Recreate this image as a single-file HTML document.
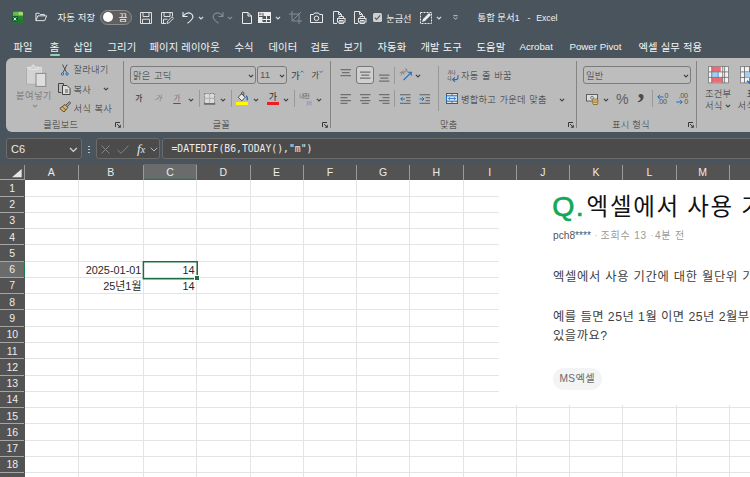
<!DOCTYPE html>
<html lang="ko">
<head>
<meta charset="utf-8">
<title>통합 문서1 - Excel</title>
<style>
html,body{margin:0;padding:0;background:#49545d;}
body{width:750px;height:477px;overflow:hidden;position:relative;font-family:"Liberation Sans","Noto Sans CJK KR",sans-serif;}
#app{position:absolute;left:0;top:0;width:750px;height:477px;overflow:hidden;background:#49545d;}
.t{position:absolute;white-space:nowrap;line-height:14px;height:14px;}
.tt{color:#f2f2f2;font-size:9.8px;}
.tab{color:#f4f4f4;font-size:10.3px;letter-spacing:0.15px;}
#ribbon{position:absolute;left:6px;top:58px;width:760px;height:73.9px;background:#bbbbbb;border-radius:6px 0 0 6px;}
.rt{color:#2e2e2e;font-weight:300;font-size:9.3px;letter-spacing:0.2px;word-spacing:0.7px;}
.rl{color:#333;font-weight:300;font-size:9.3px;letter-spacing:0.2px;}
.dis{color:#7e7e7e;font-weight:400;}
.vsep{position:absolute;width:1px;background:#848484;}
.box{position:absolute;box-sizing:border-box;border:1px solid #7b7b7b;border-radius:3px;background:#bdbdbd;}
svg{position:absolute;overflow:visible;}
.fbox{position:absolute;box-sizing:border-box;border:1px solid #6b6b6b;border-radius:3px;background:#4b4b4b;}
#sheet{position:absolute;left:0;top:163.5px;width:750px;height:314px;background:#fff;overflow:hidden;}
.ch{position:absolute;top:0;height:16.3px;background:#535353;color:#ececec;font-size:10.5px;text-align:center;line-height:17px;}
.rh{position:absolute;left:0;width:24.5px;background:#535353;color:#ececec;font-size:10.5px;text-align:center;}
.gl{position:absolute;background:#e4e4e4;}
.cell{position:absolute;font-size:10.9px;color:#2a2a2a;white-space:nowrap;text-align:right;line-height:16px;height:16px;}
#pic{position:absolute;left:499px;top:16.3px;width:260px;height:225px;background:#fff;overflow:hidden;font-family:"Liberation Sans","Noto Sans CJK KR",sans-serif;}
</style>
</head>
<body>
<div id="app">
<!-- title bar -->
<svg style="left:11px;top:11px" width="13" height="13" viewBox="11 11 13 13"><rect x="13" y="11.8" width="10" height="11.6" rx="1.2" fill="#23792c"/><path d="M13 15.7 V13 A1.2 1.2 0 0 1 14.2 11.8 H18.3 V15.7 Z" fill="#5cc04a"/><path d="M18.3 11.8 H21.8 A1.2 1.2 0 0 1 23 13 V15.7 H18.3 Z" fill="#a4da69"/><rect x="18.3" y="15.7" width="4.7" height="3.6" fill="#2a8533"/><rect x="12" y="16.3" width="5.8" height="5.4" rx="0.9" fill="#0e5a2d"/><path d="M13.6 17.5 L16.2 20.5 M16.2 17.5 L13.6 20.5" stroke="#fff" stroke-width="0.95" fill="none"/></svg>
<svg style="left:35px;top:12.4px" width="12.3" height="9.6" viewBox="0 0 13 10" preserveAspectRatio="none"><path d="M1 9 V1.3 H4.3 L5.6 2.6 H10 V4 M1 9 L3 4 H12.3 L10.3 9 Z" fill="none" stroke="#e8e8e8" stroke-width="1" stroke-linejoin="round"/></svg>
<div class="t tt" style="left:57.4px;top:11.2px;font-size:9.4px;letter-spacing:0.15px">자동 저장</div>
<div style="position:absolute;left:100.3px;top:9.7px;width:31.6px;height:15px;box-sizing:border-box;border:1px solid #8d8d8d;border-radius:7.5px;background:#5f5f5f"></div>
<div style="position:absolute;left:102.8px;top:12px;width:10.4px;height:10.4px;border-radius:5.2px;background:#fff"></div>
<div class="t tt" style="left:118.7px;top:11.4px;font-size:9.3px;">끔</div>
<svg style="left:139.5px;top:11.5px" width="12" height="12" viewBox="0 0 12 12"><path d="M0.5 0.5 H11.5 V11.5 H0.5 Z M3 0.5 V4.5 H9 V0.5 M2.5 11.5 V7.2 H9.5 V11.5" fill="none" stroke="#dedede" stroke-width="1"/></svg>
<svg style="left:160.5px;top:11.5px" width="13" height="12" viewBox="0 0 13 12"><path d="M5 11.5 H0.5 V0.5 H11.5 V4.5 M3 0.5 V4.5 H9 V0.5 M2.5 11.5 V7.2 H6.5" fill="none" stroke="#dedede" stroke-width="1"/><path d="M6 11.5 L6.6 9.2 L11 4.8 L12.5 6.3 L8.1 10.7 Z" fill="none" stroke="#e8e8e8" stroke-width="0.9"/></svg>
<svg style="left:182px;top:11px" width="13" height="13" viewBox="0 0 13 13"><path d="M1 1 V5.5 H5.5 M1.3 5.2 C3 2.2 6.5 1 9 2.6 C12.3 4.8 11.5 8 5.5 12.3" fill="none" stroke="#ececec" stroke-width="1.1"/></svg>
<svg style="left:196.5px;top:14.5px" width="8" height="6" viewBox="0 0 8 6"><path d="M1.9 1.8 L4 3.9 L6.1 1.8" fill="none" stroke="#dcdcdc" stroke-width="1.2"/></svg>
<svg style="left:210.6px;top:11px" width="13" height="13" viewBox="0 0 13 13"><path d="M12 1 V5.5 H7.5 M11.7 5.2 C10 2.2 6.5 1 4 2.6 C0.7 4.8 1.5 8 7.5 12.3" fill="none" stroke="#858d94" stroke-width="1.1"/></svg>
<svg style="left:225.5px;top:14.5px" width="8" height="6" viewBox="0 0 8 6"><path d="M1.9 1.8 L4 3.9 L6.1 1.8" fill="none" stroke="#858d94" stroke-width="1.2"/></svg>
<svg style="left:241.5px;top:11.5px" width="10" height="12" viewBox="0 0 10 12"><path d="M0.5 0.5 H6 L9.5 4 V11.5 H0.5 Z M6 0.5 V4 H9.5" fill="none" stroke="#ececec" stroke-width="1"/></svg>
<svg style="left:258px;top:12px" width="13" height="11" viewBox="0 0 13 11"><rect x="0.5" y="0.5" width="12" height="10" fill="none" stroke="#ececec" stroke-width="1"/><rect x="0" y="0" width="4.5" height="4" fill="#ececec"/><rect x="5.5" y="1" width="7" height="3" fill="#ececec"/><rect x="1" y="5" width="3.5" height="5.5" fill="#ececec"/><path d="M4.5 7.5 H12.5 M8.5 4 V10.5" stroke="#ececec" stroke-width="1"/><path d="M1 1.3 H3.5 M1 2.7 H3.5" stroke="#49545d" stroke-width="0.7"/></svg>
<svg style="left:273.5px;top:14.5px" width="8" height="6" viewBox="0 0 8 6"><path d="M1.9 1.8 L4 3.9 L6.1 1.8" fill="none" stroke="#dcdcdc" stroke-width="1.2"/></svg>
<svg style="left:289px;top:11px" width="13" height="13" viewBox="0 0 13 13"><path d="M3 0 V10 H13 M0 3 H10 V13 M3.5 9.5 L12 1" fill="none" stroke="#858d94" stroke-width="1"/></svg>
<svg style="left:310px;top:12px" width="13" height="11" viewBox="0 0 13 11"><path d="M0.5 2.5 H3.5 L4.5 1 H8.5 L9.5 2.5 H12.5 V10.5 H0.5 Z" fill="none" stroke="#ececec" stroke-width="1"/><circle cx="6.5" cy="6.3" r="2.3" fill="none" stroke="#ececec" stroke-width="1"/></svg>
<svg style="left:333px;top:11px" width="13" height="13" viewBox="0 0 13 13"><path d="M4 12.5 H0.5 V0.5 H5.5 L8.5 3.5 V5 M5.5 0.5 V3.5 H8.5" fill="none" stroke="#e4e4e4" stroke-width="1"/><rect x="4.5" y="7.5" width="7.5" height="3.5" fill="none" stroke="#e4e4e4" stroke-width="1"/><path d="M6 7.5 V5.5 H10.5 V7.5 M6 11 V12.5 H10.5 V11 M6 9.5 H10.5" fill="none" stroke="#e4e4e4" stroke-width="1"/></svg>
<svg style="left:354px;top:11px" width="13" height="13" viewBox="0 0 13 13"><path d="M4 12.5 H0.5 V0.5 H5.5 L8.5 3.5 V5 M5.5 0.5 V3.5 H8.5" fill="none" stroke="#e4e4e4" stroke-width="1"/><rect x="4.5" y="7.5" width="7.5" height="3.5" fill="none" stroke="#e4e4e4" stroke-width="1"/><path d="M6 7.5 V5.5 H10.5 V7.5 M6 11 V12.5 H10.5 V11 M6 9.5 H10.5" fill="none" stroke="#e4e4e4" stroke-width="1"/></svg>
<div style="position:absolute;left:372.8px;top:12.8px;width:9px;height:9px;background:#cfcfcf;border-radius:1.5px"></div>
<svg style="left:373px;top:13px" width="9" height="9" viewBox="0 0 9 9"><path d="M1.8 4.6 L3.6 6.4 L7.2 2.4" fill="none" stroke="#555" stroke-width="1.1"/></svg>
<div class="t tt" style="left:386.2px;top:12px;font-size:9.2px;">눈금선</div>
<svg style="left:419.5px;top:11.5px" width="12" height="12" viewBox="0 0 12 12"><rect x="0.5" y="0.5" width="11" height="11" fill="none" stroke="#ececec" stroke-width="1" stroke-dasharray="2 1"/><path d="M2 10 L3 7 L9 1 L11 3 L5 9 Z" fill="#ececec"/></svg>
<svg style="left:434.5px;top:14.5px" width="8" height="6" viewBox="0 0 8 6"><path d="M1.9 1.8 L4 3.9 L6.1 1.8" fill="none" stroke="#dcdcdc" stroke-width="1.2"/></svg>
<svg style="left:453px;top:15px" width="5" height="5.2" viewBox="0 0 6 6" preserveAspectRatio="none"><path d="M0.5 0.8 H5.5 M0.8 2.8 L3 5 L5.2 2.8" fill="none" stroke="#dcdcdc" stroke-width="1"/></svg>
<div class="t tt" style="left:477.5px;top:11.4px;font-size:9.4px;">통합 문서1</div>
<div class="t tt" style="left:527.6px;top:10.6px;font-size:9px;">-</div>
<div class="t tt" style="left:536.2px;top:10.6px;font-size:8.7px;">Excel</div>
<div class="t tab" style="left:13.4px;top:40.7px;">파일</div>
<div class="t tab" style="left:49.7px;top:40.7px;">홈</div>
<div class="t tab" style="left:73.4px;top:40.7px;">삽입</div>
<div class="t tab" style="left:107.4px;top:40.7px;">그리기</div>
<div class="t tab" style="left:149.4px;top:40.7px;">페이지 레이아웃</div>
<div class="t tab" style="left:234.4px;top:40.7px;">수식</div>
<div class="t tab" style="left:268.4px;top:40.7px;">데이터</div>
<div class="t tab" style="left:310.4px;top:40.7px;">검토</div>
<div class="t tab" style="left:343.4px;top:40.7px;">보기</div>
<div class="t tab" style="left:377.4px;top:40.7px;">자동화</div>
<div class="t tab" style="left:420.4px;top:40.7px;">개발 도구</div>
<div class="t tab" style="left:476.4px;top:40.7px;">도움말</div>
<div class="t tab" style="left:519.4px;top:39.9px;font-size:9.75px;letter-spacing:0">Acrobat</div>
<div class="t tab" style="left:569.4px;top:39.9px;font-size:9.75px;letter-spacing:0">Power Pivot</div>
<div class="t tab" style="left:638.4px;top:40.7px;">엑셀 실무 적용</div>
<div style="position:absolute;left:49.8px;top:54px;width:10px;height:1.5px;background:#8fd6b0;border-radius:1px"></div>
<!-- ribbon -->
<div id="ribbon"></div>
<div class="vsep" style="left:123px;top:61px;height:66.5px"></div>
<div class="vsep" style="left:330px;top:61px;height:66.5px"></div>
<div class="vsep" style="left:576px;top:61px;height:66.5px"></div>
<div class="vsep" style="left:696px;top:61px;height:66.5px"></div>
<div class="vsep" style="left:199px;top:90px;height:17px;background:#999"></div>
<div class="vsep" style="left:230.5px;top:90px;height:17px;background:#999"></div>
<div class="vsep" style="left:294px;top:90px;height:17px;background:#999"></div>
<div class="vsep" style="left:394.3px;top:67px;height:17px;background:#999"></div>
<div class="vsep" style="left:394.3px;top:90px;height:17px;background:#999"></div>
<div class="vsep" style="left:438px;top:66px;height:45px;background:#999"></div>
<div class="vsep" style="left:651.5px;top:90px;height:17px;background:#999"></div>
<svg style="left:114.5px;top:122px" width="6" height="6" viewBox="0 0 6 6"><path d="M0.5 5 V0.5 H5" fill="none" stroke="#3a3a3a" stroke-width="1"/><path d="M2 2 L5 5" fill="none" stroke="#3a3a3a" stroke-width="1"/><path d="M5.8 2.6 V5.8 H2.6 Z" fill="#3a3a3a"/></svg>
<svg style="left:321.5px;top:122px" width="6" height="6" viewBox="0 0 6 6"><path d="M0.5 5 V0.5 H5" fill="none" stroke="#3a3a3a" stroke-width="1"/><path d="M2 2 L5 5" fill="none" stroke="#3a3a3a" stroke-width="1"/><path d="M5.8 2.6 V5.8 H2.6 Z" fill="#3a3a3a"/></svg>
<svg style="left:568px;top:122px" width="6" height="6" viewBox="0 0 6 6"><path d="M0.5 5 V0.5 H5" fill="none" stroke="#3a3a3a" stroke-width="1"/><path d="M2 2 L5 5" fill="none" stroke="#3a3a3a" stroke-width="1"/><path d="M5.8 2.6 V5.8 H2.6 Z" fill="#3a3a3a"/></svg>
<svg style="left:688px;top:122px" width="6" height="6" viewBox="0 0 6 6"><path d="M0.5 5 V0.5 H5" fill="none" stroke="#3a3a3a" stroke-width="1"/><path d="M2 2 L5 5" fill="none" stroke="#3a3a3a" stroke-width="1"/><path d="M5.8 2.6 V5.8 H2.6 Z" fill="#3a3a3a"/></svg>
<svg style="left:24px;top:62px" width="24" height="26" viewBox="24 62 24 26"><rect x="26.2" y="67.2" width="15.4" height="17.2" fill="#d3d3d3"/><path d="M26.5 67.2 V84.2 H36" fill="none" stroke="#a6a6a6" stroke-width="0.8"/><path d="M26.5 67.4 H41.4 V73" fill="none" stroke="#e4e4e4" stroke-width="0.8"/><path d="M29 69.4 V67.2 H31.6 L33.4 64.6 L35.2 67.2 H38.3 V69.4 Z" fill="#cfcfcf" stroke="#e6e6e6" stroke-width="0.9" stroke-linejoin="round"/><rect x="36" y="73.4" width="9.8" height="13" fill="#dedede" stroke="#8a8a8a" stroke-width="1"/></svg>
<div class="t rt dis" style="left:16px;top:88.8px;letter-spacing:0.4px">붙여넣기</div>
<svg style="left:31px;top:103px" width="8" height="6" viewBox="0 0 8 6"><path d="M1.9 1.8 L4 3.9 L6.1 1.8" fill="none" stroke="#8b8b8b" stroke-width="1.2"/></svg>
<svg style="left:60.6px;top:64.3px" width="7.6" height="12" viewBox="0.7 0 7.6 12"><path d="M2.2 0.5 L6.4 8.8 M6.8 0.5 L2.6 8.8" fill="none" stroke="#444" stroke-width="0.9"/><circle cx="2.2" cy="10" r="1.2" fill="none" stroke="#1e6fc4" stroke-width="1"/><circle cx="6.8" cy="10" r="1.2" fill="none" stroke="#1e6fc4" stroke-width="1"/></svg>
<div class="t rt" style="left:73.6px;top:63.3px;">잘라내기</div>
<svg style="left:58px;top:83px" width="13" height="12" viewBox="0 0 13 12"><path d="M3.5 9.5 H0.5 V0.5 H5.5 V2" fill="none" stroke="#444" stroke-width="1"/><path d="M4.5 2.5 H9 L12 5.5 V11.5 H4.5 Z" fill="#dedede" stroke="#444" stroke-width="1"/><path d="M7 7 H10 M7 9 H10" stroke="#444" stroke-width="0.9"/></svg>
<div class="t rt" style="left:73.4px;top:82.5px;">복사</div>
<svg style="left:102px;top:86px" width="8" height="6" viewBox="0 0 8 6"><path d="M1.9 1.8 L4 3.9 L6.1 1.8" fill="none" stroke="#444" stroke-width="1.2"/></svg>
<svg style="left:59px;top:101px" width="12" height="12" viewBox="0 0 12 12"><path d="M6.5 4.5 L10.5 0.8 L11.5 2 L8 5.8" fill="none" stroke="#444" stroke-width="1"/><path d="M0.8 7.5 L6 3.5 L8.8 6.5 L5 11 Z" fill="#e9b44c" stroke="#444" stroke-width="0.9"/><path d="M3.2 5.6 L7 9" stroke="#444" stroke-width="0.8"/></svg>
<div class="t rt" style="left:73.4px;top:101.5px;">서식 복사</div>
<div class="t rl" style="left:43.2px;top:117.9px;">클립보드</div>
<div class="box" style="left:130px;top:66.1px;width:126px;height:18.2px"></div>
<div class="t rt" style="left:133px;top:68.6px;">맑은 고딕</div>
<svg style="left:247px;top:72.5px" width="8" height="6" viewBox="0 0 8 6"><path d="M1.9 1.8 L4 3.9 L6.1 1.8" fill="none" stroke="#444" stroke-width="1.2"/></svg>
<div class="box" style="left:257px;top:66.1px;width:29.5px;height:18.2px"></div>
<div class="t rt" style="left:260px;top:68.3px;font-size:9.7px;color:#5e5448;letter-spacing:0">11</div>
<svg style="left:277.5px;top:72.5px" width="8" height="6" viewBox="0 0 8 6"><path d="M1.9 1.8 L4 3.9 L6.1 1.8" fill="none" stroke="#444" stroke-width="1.2"/></svg>
<div class="t rt" style="left:291px;top:68.5px;font-size:9.5px;color:#3a3a3a;font-weight:400">가</div>
<svg style="left:299.6px;top:70.2px" width="4.2" height="3.4" viewBox="0 0 5 4"><path d="M0.6 3 L2.5 1 L4.4 3" fill="none" stroke="#1e6fc4" stroke-width="1"/></svg>
<div class="t rt" style="left:311.5px;top:69px;font-size:8.2px;color:#3a3a3a;font-weight:400">가</div>
<svg style="left:318.6px;top:70.2px" width="4.2" height="3.4" viewBox="0 0 5 4"><path d="M0.6 1 L2.5 3 L4.4 1" fill="none" stroke="#1e6fc4" stroke-width="1"/></svg>
<div class="t rt" style="left:135.3px;top:92.3px;font-size:7.8px;font-weight:500;color:#3c3c3c">가</div>
<div class="t rt" style="left:154.5px;top:92.3px;font-size:7.8px;color:#666;transform:skewX(-14deg)">가</div>
<div class="t rt" style="left:173.3px;top:92px;font-size:7.8px;color:#555;text-decoration:underline;text-underline-offset:1.5px">가</div>
<svg style="left:186.7px;top:96.5px" width="8" height="6" viewBox="0 0 8 6"><path d="M1.9 1.8 L4 3.9 L6.1 1.8" fill="none" stroke="#444" stroke-width="1.2"/></svg>
<svg style="left:204px;top:93px" width="11.2" height="12" viewBox="0 0 11.2 12"><rect x="0.6" y="0.6" width="10" height="10" fill="#dcdcdc"/><path d="M5.6 0.6 V10.6 M0.6 5.4 H10.6" stroke="#b4b4b4" stroke-width="1.1"/><path d="M0.6 0.6 H10.6 M0.6 0.6 V10.4 M10.6 0.6 V10.4" fill="none" stroke="#777" stroke-width="0.9" stroke-dasharray="1.6 1"/><path d="M0 10.9 H11.2" stroke="#646464" stroke-width="1.6"/></svg>
<svg style="left:219px;top:96.5px" width="8" height="6" viewBox="0 0 8 6"><path d="M1.9 1.8 L4 3.9 L6.1 1.8" fill="none" stroke="#444" stroke-width="1.2"/></svg>
<svg style="left:237px;top:91px" width="12" height="11" viewBox="237 91 12 11"><path d="M241.6 93.6 L245 97.4 L241.8 100.9 L238.3 97.3 Z" fill="#ececec" stroke="#3c3c3c" stroke-width="0.9" stroke-linejoin="round"/><path d="M241.6 94.6 V92.6 C241.8 91.6 243.6 91.6 243.8 92.8 V95.8" fill="none" stroke="#3c3c3c" stroke-width="0.8"/><path d="M246 95.8 C247.2 96.6 247.6 98.6 247.2 100.4" fill="none" stroke="#1e6fc4" stroke-width="1.3"/></svg>
<div style="position:absolute;left:236.3px;top:101.8px;width:12.1px;height:3.2px;background:#fffa00"></div>
<svg style="left:252px;top:96.5px" width="8" height="6" viewBox="0 0 8 6"><path d="M1.9 1.8 L4 3.9 L6.1 1.8" fill="none" stroke="#444" stroke-width="1.2"/></svg>
<div class="t rt" style="left:268.7px;top:90px;font-size:8.9px;color:#2a2a2a;font-weight:400">가</div>
<div style="position:absolute;left:266.8px;top:101.8px;width:12.2px;height:3.2px;background:#ee1c23"></div>
<svg style="left:282px;top:96.5px" width="8" height="6" viewBox="0 0 8 6"><path d="M1.9 1.8 L4 3.9 L6.1 1.8" fill="none" stroke="#444" stroke-width="1.2"/></svg>
<div class="t rt" style="left:299.3px;top:88.8px;font-size:6px;color:#666;letter-spacing:-0.5px;font-weight:400">내천</div>
<div class="t rt" style="left:306.3px;top:95.8px;font-size:5.3px;color:#2a78cc;font-weight:400">川</div>
<svg style="left:314.6px;top:96.5px" width="8" height="6" viewBox="0 0 8 6"><path d="M1.9 1.8 L4 3.9 L6.1 1.8" fill="none" stroke="#444" stroke-width="1.2"/></svg>
<div class="t rl" style="left:212.5px;top:117.9px;">글꼴</div>
<svg style="left:0;top:0" width="750" height="140" viewBox="0 0 750 140"><path d="M340.5 69.7 H351 M342 72.6 H349.5 M340.5 75.5 H351" fill="none" stroke="#707070" stroke-width="1.25"/></svg>
<div class="box" style="left:356px;top:66.1px;width:17.7px;height:18.2px;background:#cfcfcf;border-color:#777"></div>
<svg style="left:0;top:0" width="750" height="140" viewBox="0 0 750 140"><path d="M360 72.2 H370.5 M361.25 75.2 H369.25 M360 78.2 H370.5" fill="none" stroke="#707070" stroke-width="1.25"/></svg>
<svg style="left:0;top:0" width="750" height="140" viewBox="0 0 750 140"><path d="M379 75.2 H389.5 M380.25 78.1 H388.25 M379 81 H389.5" fill="none" stroke="#707070" stroke-width="1.25"/></svg>
<svg style="left:396px;top:64px" width="16" height="16" viewBox="396 64 16 16"><text transform="translate(401.3,76.3) rotate(-38)" font-size="4.8" fill="#4a4a4a" font-family="Liberation Sans, Noto Sans CJK KR, sans-serif">가나</text></svg>
<svg style="left:402px;top:70px" width="11" height="11" viewBox="0 0 11 11"><path d="M1.6 10 L9 2.6 M5.8 2.3 H9.3 V5.8" fill="none" stroke="#1e6fc4" stroke-width="1.1"/></svg>
<svg style="left:414px;top:73px" width="8" height="6" viewBox="0 0 8 6"><path d="M1.9 1.8 L4 3.9 L6.1 1.8" fill="none" stroke="#444" stroke-width="1.2"/></svg>
<svg style="left:0;top:0" width="750" height="140" viewBox="0 0 750 140"><path d="M340.5 94.7 H351 M340.5 97.6 H347.5 M340.5 100.5 H351 M340.5 103.4 H347.5" fill="none" stroke="#707070" stroke-width="1.25"/></svg>
<svg style="left:0;top:0" width="750" height="140" viewBox="0 0 750 140"><path d="M360 94.7 H370.5 M361.75 97.6 H368.75 M360 100.5 H370.5 M361.75 103.4 H368.75" fill="none" stroke="#707070" stroke-width="1.25"/></svg>
<svg style="left:0;top:0" width="750" height="140" viewBox="0 0 750 140"><path d="M379 94.7 H389.5 M382.5 97.6 H389.5 M379 100.5 H389.5 M382.5 103.4 H389.5" fill="none" stroke="#707070" stroke-width="1.25"/></svg>
<svg style="left:0;top:0" width="750" height="140" viewBox="0 0 750 140"><path d="M400 94.7 H410.5" fill="none" stroke="#707070" stroke-width="1.25"/></svg>
<svg style="left:0;top:0" width="750" height="140" viewBox="0 0 750 140"><path d="M400 103.4 H410.5" fill="none" stroke="#707070" stroke-width="1.25"/></svg>
<svg style="left:0;top:0" width="750" height="140" viewBox="0 0 750 140"><path d="M406 97.6 H410.5 M406 100.5 H410.5" fill="none" stroke="#707070" stroke-width="1.25"/></svg>
<svg style="left:400px;top:96.1px" width="6" height="6" viewBox="0 0 6 6"><path d="M5 3 H0.8 M2.6 1.1 L0.7 3 L2.6 4.9" fill="none" stroke="#1e6fc4" stroke-width="1"/></svg>
<svg style="left:0;top:0" width="750" height="140" viewBox="0 0 750 140"><path d="M419.5 94.7 H430" fill="none" stroke="#707070" stroke-width="1.25"/></svg>
<svg style="left:0;top:0" width="750" height="140" viewBox="0 0 750 140"><path d="M419.5 103.4 H430" fill="none" stroke="#707070" stroke-width="1.25"/></svg>
<svg style="left:0;top:0" width="750" height="140" viewBox="0 0 750 140"><path d="M425.5 97.6 H430 M425.5 100.5 H430" fill="none" stroke="#707070" stroke-width="1.25"/></svg>
<svg style="left:419.3px;top:96.1px" width="6" height="6" viewBox="0 0 6 6"><path d="M0.5 3 H4.9 M3.1 1.1 L5 3 L3.1 4.9" fill="none" stroke="#1e6fc4" stroke-width="1"/></svg>
<svg style="left:447px;top:69px" width="13" height="13" viewBox="0 0 13 13"><text x="0.5" y="5.3" font-size="4.4" fill="#333" font-family="Liberation Sans, Noto Sans CJK KR, sans-serif">가나</text><text x="0.5" y="10.8" font-size="4.4" fill="#333" font-family="Liberation Sans, Noto Sans CJK KR, sans-serif">다</text><path d="M11 6 V8.3 C11 10 10 10.6 9 10.6 H5.8 M7.9 8.4 L5.6 10.6 L7.9 12.8" fill="none" stroke="#1e6fc4" stroke-width="1.1"/></svg>
<div class="t rt" style="left:461px;top:69px;">자동 줄 바꿈</div>
<svg style="left:446px;top:93px" width="12" height="11" viewBox="0 0 12 11"><rect x="0.5" y="0.5" width="11" height="10" fill="#e4e4e4" stroke="#555" stroke-width="1"/><rect x="0.5" y="2.8" width="11" height="5.4" fill="#cfe4f7" stroke="#1e6fc4" stroke-width="1"/><path d="M2.5 5.5 H9.5 M4 4.2 L2.5 5.5 L4 6.8 M8 4.2 L9.5 5.5 L8 6.8" fill="none" stroke="#1e6fc4" stroke-width="0.8"/><path d="M6 0.5 V2.8 M6 8.2 V10.5" stroke="#555" stroke-width="0.8"/></svg>
<div class="t rt" style="left:461px;top:92.8px;">병합하고 가운데 맞춤</div>
<svg style="left:558px;top:96.5px" width="8" height="6" viewBox="0 0 8 6"><path d="M1.9 1.8 L4 3.9 L6.1 1.8" fill="none" stroke="#444" stroke-width="1.2"/></svg>
<div class="t rl" style="left:440px;top:117.9px;">맞춤</div>
<div class="box" style="left:583px;top:66.1px;width:108px;height:18.2px"></div>
<div class="t rt" style="left:586px;top:68.8px;">일반</div>
<svg style="left:682px;top:72.5px" width="8" height="6" viewBox="0 0 8 6"><path d="M1.9 1.8 L4 3.9 L6.1 1.8" fill="none" stroke="#444" stroke-width="1.2"/></svg>
<svg style="left:586px;top:94px" width="13" height="11" viewBox="0 0 13 11"><rect x="0.5" y="0.5" width="11" height="6.5" fill="#dcdcdc" stroke="#555" stroke-width="0.9"/><circle cx="6" cy="3.7" r="1.4" fill="none" stroke="#555" stroke-width="0.7"/><rect x="6.8" y="5" width="5" height="5.5" rx="0.8" fill="#f4d58a" stroke="#7a5a16" stroke-width="0.8"/><path d="M7.5 7 H11 M7.5 8.7 H11" stroke="#7a5a16" stroke-width="0.7"/></svg>
<svg style="left:601.5px;top:96.5px" width="8" height="6" viewBox="0 0 8 6"><path d="M1.9 1.8 L4 3.9 L6.1 1.8" fill="none" stroke="#444" stroke-width="1.2"/></svg>
<div class="t rt" style="left:616px;top:92px;font-size:14.2px;color:#5e5e5e;line-height:16px;height:16px;margin-top:-1px">%</div>
<div class="t rt" style="left:637.5px;top:90px;font-size:28px;font-family:'Liberation Serif',serif;font-weight:bold;color:#4a4a4a;line-height:16px;height:16px;margin-top:-8.6px">,</div>
<svg style="left:657px;top:93.7px" width="12" height="12" viewBox="0 0 12 12"><path d="M6.6 3 H0.8 M3 0.8 L0.8 3 L3 5.2" fill="none" stroke="#1e6fc4" stroke-width="1"/></svg>
<div class="t rt" style="left:664.5px;top:88.5px;font-size:7.2px;color:#555;letter-spacing:0">0</div>
<div class="t rt" style="left:657.5px;top:95px;font-size:7.2px;color:#555;letter-spacing:-0.2px">.00</div>
<div class="t rt" style="left:678.5px;top:88.5px;font-size:7.2px;color:#555;letter-spacing:-0.2px">.00</div>
<svg style="left:676px;top:98.8px" width="8" height="6" viewBox="0 0 8 6"><path d="M0.2 3 H6.2 M4 0.8 L6.2 3 L4 5.2" fill="none" stroke="#1e6fc4" stroke-width="1"/></svg>
<div class="t rt" style="left:684.2px;top:95px;font-size:7.2px;color:#555;letter-spacing:0">0</div>
<div class="t rl" style="left:612px;top:117.9px;">표시 형식</div>
<svg style="left:708px;top:65.8px" width="21" height="17.4" viewBox="0 0 21 17.4"><rect x="0.5" y="0.5" width="20" height="16.4" fill="#f3f3f3" stroke="#8a8a8a" stroke-width="1"/><rect x="3.8" y="0.8" width="9" height="5" fill="#ee6a75"/><rect x="3.8" y="6.2" width="6.4" height="5" fill="#9fd0f5"/><rect x="3.8" y="11.6" width="10.8" height="5" fill="#ee6a75"/><path d="M3.7 0.5 V17 M14.7 0.5 V17 M16.6 0.5 V17 M0.5 5.9 H20.5 M0.5 11.4 H20.5" fill="none" stroke="#6a6a6a" stroke-width="0.8"/><path d="M10.2 6 V11.4" fill="none" stroke="#3a86cf" stroke-width="0.8"/></svg>
<div class="t rt" style="left:705px;top:87.1px;">조건부</div>
<div class="t rt" style="left:705px;top:98.5px;">서식</div>
<svg style="left:724px;top:103px" width="8" height="6" viewBox="0 0 8 6"><path d="M1.9 1.8 L4 3.9 L6.1 1.8" fill="none" stroke="#444" stroke-width="1.2"/></svg>
<svg style="left:740.3px;top:65.8px" width="21" height="17.4" viewBox="0 0 21 16.5" preserveAspectRatio="none"><rect x="0.5" y="0.5" width="20" height="15.5" fill="#f1f1f1" stroke="#8a8a8a" stroke-width="1"/><path d="M4.5 0.5 V16 M9.5 0.5 V16 M0.5 5.6 H20.5 M0.5 10.9 H20.5" fill="none" stroke="#666" stroke-width="0.8"/><rect x="5" y="6" width="6" height="5" fill="#9fd0f5"/><path d="M7 14 L10 16.5" stroke="#1e6fc4" stroke-width="1.5"/></svg>
<div class="t rt" style="left:746.5px;top:87.1px;">표</div>
<div class="t rt" style="left:737.6px;top:98.5px;">서식</div>
<!-- formula bar -->
<div class="fbox" style="left:6px;top:138px;width:75.5px;height:21px"></div>
<div class="t tt" style="left:11px;top:142px;font-size:11px;color:#eaeaea">C6</div>
<svg style="left:68.8px;top:147px" width="9" height="6" viewBox="0 0 9 6"><path d="M1 1 L4.4 4.4 L7.8 1" fill="none" stroke="#d8d8d8" stroke-width="1.2"/></svg>
<div style="position:absolute;left:88px;top:145.5px;width:1.6px;height:1.6px;background:#cfcfcf;border-radius:1px"></div>
<div style="position:absolute;left:88px;top:148.5px;width:1.6px;height:1.6px;background:#cfcfcf;border-radius:1px"></div>
<div style="position:absolute;left:88px;top:151.5px;width:1.6px;height:1.6px;background:#cfcfcf;border-radius:1px"></div>
<div class="fbox" style="left:95.8px;top:138px;width:64.2px;height:21px"></div>
<svg style="left:101px;top:144.5px" width="9" height="9" viewBox="0 0 9 9"><path d="M0.5 0.5 L8.5 8.5 M8.5 0.5 L0.5 8.5" fill="none" stroke="#858585" stroke-width="1"/></svg>
<svg style="left:117px;top:144.5px" width="12" height="9" viewBox="0 0 12 9"><path d="M0.5 5 L4 8.3 L11.5 0.7" fill="none" stroke="#858585" stroke-width="1"/></svg>
<div class="t tt" style="left:137px;top:141.5px;font-family:'Liberation Serif',serif;font-size:13.5px;color:#e4e4e4;line-height:16px;height:16px;margin-top:-1px"><i>f</i><i style="font-size:10px">x</i></div>
<svg style="left:150px;top:146.5px" width="8" height="5" viewBox="0 0 8 5"><path d="M0.8 0.8 L4 4 L7.2 0.8" fill="none" stroke="#c4c4c4" stroke-width="0.9"/></svg>
<div class="fbox" style="left:162.2px;top:138px;width:600px;height:21px"></div>
<div class="t tt" style="left:171.5px;top:142px;font-family:'DejaVu Sans Mono','Liberation Mono',monospace;font-size:9.76px;color:#ececec">=DATEDIF(B6,TODAY(),"m")</div>
<!-- sheet -->
<div id="sheet">
<div class="gl" style="left:77.5px;top:0;width:1px;height:320px"></div>
<div class="gl" style="left:143px;top:0;width:1px;height:320px"></div>
<div class="gl" style="left:196.25px;top:0;width:1px;height:320px"></div>
<div class="gl" style="left:249.5px;top:0;width:1px;height:320px"></div>
<div class="gl" style="left:302.75px;top:0;width:1px;height:320px"></div>
<div class="gl" style="left:356px;top:0;width:1px;height:320px"></div>
<div class="gl" style="left:409.25px;top:0;width:1px;height:320px"></div>
<div class="gl" style="left:462.5px;top:0;width:1px;height:320px"></div>
<div class="gl" style="left:515.75px;top:0;width:1px;height:320px"></div>
<div class="gl" style="left:569px;top:0;width:1px;height:320px"></div>
<div class="gl" style="left:622.25px;top:0;width:1px;height:320px"></div>
<div class="gl" style="left:675.5px;top:0;width:1px;height:320px"></div>
<div class="gl" style="left:728.75px;top:0;width:1px;height:320px"></div>
<div class="gl" style="left:782px;top:0;width:1px;height:320px"></div>
<div class="gl" style="left:0;top:32.07px;width:760px;height:1px"></div>
<div class="gl" style="left:0;top:48.34px;width:760px;height:1px"></div>
<div class="gl" style="left:0;top:64.61px;width:760px;height:1px"></div>
<div class="gl" style="left:0;top:80.88px;width:760px;height:1px"></div>
<div class="gl" style="left:0;top:97.15px;width:760px;height:1px"></div>
<div class="gl" style="left:0;top:113.42px;width:760px;height:1px"></div>
<div class="gl" style="left:0;top:129.69px;width:760px;height:1px"></div>
<div class="gl" style="left:0;top:145.96px;width:760px;height:1px"></div>
<div class="gl" style="left:0;top:162.23px;width:760px;height:1px"></div>
<div class="gl" style="left:0;top:178.5px;width:760px;height:1px"></div>
<div class="gl" style="left:0;top:194.77px;width:760px;height:1px"></div>
<div class="gl" style="left:0;top:211.04px;width:760px;height:1px"></div>
<div class="gl" style="left:0;top:227.31px;width:760px;height:1px"></div>
<div class="gl" style="left:0;top:243.58px;width:760px;height:1px"></div>
<div class="gl" style="left:0;top:259.85px;width:760px;height:1px"></div>
<div class="gl" style="left:0;top:276.12px;width:760px;height:1px"></div>
<div class="gl" style="left:0;top:292.39px;width:760px;height:1px"></div>
<div class="gl" style="left:0;top:308.66px;width:760px;height:1px"></div>
<div class="gl" style="left:0;top:324.93px;width:760px;height:1px"></div>
<div style="position:absolute;left:0;top:0;width:760px;height:16.3px;background:#535353"></div>
<div class="ch" style="left:24.5px;width:53.5px;">A</div>
<div class="ch" style="left:78px;width:65.5px;">B</div>
<div class="ch" style="left:143.5px;width:53.25px;background:#6b6b6b;box-shadow:inset 0 -1.2px 0 #1f7a4a;">C</div>
<div class="ch" style="left:196.75px;width:53.25px;">D</div>
<div class="ch" style="left:250px;width:53.25px;">E</div>
<div class="ch" style="left:303.25px;width:53.25px;">F</div>
<div class="ch" style="left:356.5px;width:53.25px;">G</div>
<div class="ch" style="left:409.75px;width:53.25px;">H</div>
<div class="ch" style="left:463px;width:53.25px;">I</div>
<div class="ch" style="left:516.25px;width:53.25px;">J</div>
<div class="ch" style="left:569.5px;width:53.25px;">K</div>
<div class="ch" style="left:622.75px;width:53.25px;">L</div>
<div class="ch" style="left:676px;width:53.25px;">M</div>
<div class="ch" style="left:729.25px;width:53.25px;">N</div>
<div style="position:absolute;left:24px;top:1px;width:1px;height:15.3px;background:#9a9a9a"></div>
<div style="position:absolute;left:77.5px;top:1px;width:1px;height:15.3px;background:#9a9a9a"></div>
<div style="position:absolute;left:143px;top:1px;width:1px;height:15.3px;background:#9a9a9a"></div>
<div style="position:absolute;left:196.25px;top:1px;width:1px;height:15.3px;background:#9a9a9a"></div>
<div style="position:absolute;left:249.5px;top:1px;width:1px;height:15.3px;background:#9a9a9a"></div>
<div style="position:absolute;left:302.75px;top:1px;width:1px;height:15.3px;background:#9a9a9a"></div>
<div style="position:absolute;left:356px;top:1px;width:1px;height:15.3px;background:#9a9a9a"></div>
<div style="position:absolute;left:409.25px;top:1px;width:1px;height:15.3px;background:#9a9a9a"></div>
<div style="position:absolute;left:462.5px;top:1px;width:1px;height:15.3px;background:#9a9a9a"></div>
<div style="position:absolute;left:515.75px;top:1px;width:1px;height:15.3px;background:#9a9a9a"></div>
<div style="position:absolute;left:569px;top:1px;width:1px;height:15.3px;background:#9a9a9a"></div>
<div style="position:absolute;left:622.25px;top:1px;width:1px;height:15.3px;background:#9a9a9a"></div>
<div style="position:absolute;left:675.5px;top:1px;width:1px;height:15.3px;background:#9a9a9a"></div>
<div style="position:absolute;left:728.75px;top:1px;width:1px;height:15.3px;background:#9a9a9a"></div>
<div style="position:absolute;left:782px;top:1px;width:1px;height:15.3px;background:#9a9a9a"></div>
<div style="position:absolute;left:0;top:0;width:24.5px;height:320px;background:#535353"></div>
<div class="rh" style="top:16.3px;height:16.27px;line-height:17.27px;">1</div>
<div class="rh" style="top:32.57px;height:16.27px;line-height:17.27px;">2</div>
<div class="rh" style="top:48.84px;height:16.27px;line-height:17.27px;">3</div>
<div class="rh" style="top:65.11px;height:16.27px;line-height:17.27px;">4</div>
<div class="rh" style="top:81.38px;height:16.27px;line-height:17.27px;">5</div>
<div class="rh" style="top:97.65px;height:16.27px;line-height:17.27px;background:#6b6b6b;box-shadow:inset -1.2px 0 0 #1f7a4a;">6</div>
<div class="rh" style="top:113.92px;height:16.27px;line-height:17.27px;">7</div>
<div class="rh" style="top:130.19px;height:16.27px;line-height:17.27px;">8</div>
<div class="rh" style="top:146.46px;height:16.27px;line-height:17.27px;">9</div>
<div class="rh" style="top:162.73px;height:16.27px;line-height:17.27px;">10</div>
<div class="rh" style="top:179px;height:16.27px;line-height:17.27px;">11</div>
<div class="rh" style="top:195.27px;height:16.27px;line-height:17.27px;">12</div>
<div class="rh" style="top:211.54px;height:16.27px;line-height:17.27px;">13</div>
<div class="rh" style="top:227.81px;height:16.27px;line-height:17.27px;">14</div>
<div class="rh" style="top:244.08px;height:16.27px;line-height:17.27px;">15</div>
<div class="rh" style="top:260.35px;height:16.27px;line-height:17.27px;">16</div>
<div class="rh" style="top:276.62px;height:16.27px;line-height:17.27px;">17</div>
<div class="rh" style="top:292.89px;height:16.27px;line-height:17.27px;">18</div>
<div style="position:absolute;left:0;top:32.07px;width:24px;height:1px;background:#a5a5a5"></div>
<div style="position:absolute;left:0;top:48.34px;width:24px;height:1px;background:#a5a5a5"></div>
<div style="position:absolute;left:0;top:64.61px;width:24px;height:1px;background:#a5a5a5"></div>
<div style="position:absolute;left:0;top:80.88px;width:24px;height:1px;background:#a5a5a5"></div>
<div style="position:absolute;left:0;top:97.15px;width:24px;height:1px;background:#a5a5a5"></div>
<div style="position:absolute;left:0;top:113.42px;width:24px;height:1px;background:#a5a5a5"></div>
<div style="position:absolute;left:0;top:129.69px;width:24px;height:1px;background:#a5a5a5"></div>
<div style="position:absolute;left:0;top:145.96px;width:24px;height:1px;background:#a5a5a5"></div>
<div style="position:absolute;left:0;top:162.23px;width:24px;height:1px;background:#a5a5a5"></div>
<div style="position:absolute;left:0;top:178.5px;width:24px;height:1px;background:#a5a5a5"></div>
<div style="position:absolute;left:0;top:194.77px;width:24px;height:1px;background:#a5a5a5"></div>
<div style="position:absolute;left:0;top:211.04px;width:24px;height:1px;background:#a5a5a5"></div>
<div style="position:absolute;left:0;top:227.31px;width:24px;height:1px;background:#a5a5a5"></div>
<div style="position:absolute;left:0;top:243.58px;width:24px;height:1px;background:#a5a5a5"></div>
<div style="position:absolute;left:0;top:259.85px;width:24px;height:1px;background:#a5a5a5"></div>
<div style="position:absolute;left:0;top:276.12px;width:24px;height:1px;background:#a5a5a5"></div>
<div style="position:absolute;left:0;top:292.39px;width:24px;height:1px;background:#a5a5a5"></div>
<div style="position:absolute;left:0;top:308.66px;width:24px;height:1px;background:#a5a5a5"></div>
<div style="position:absolute;left:0;top:324.93px;width:24px;height:1px;background:#a5a5a5"></div>
<div style="position:absolute;left:24px;top:1px;width:1px;height:15.3px;background:#9a9a9a"></div>
<div style="position:absolute;left:0;top:15.8px;width:24px;height:1px;background:#a5a5a5"></div>
<svg style="left:12.3px;top:5.8px" width="9.7" height="8.2" viewBox="0 0 9.7 8.2"><path d="M9.7 0 V8.2 H0 Z" fill="#e6e6e6"/></svg>
<div class="cell" style="right:608.6px;top:98.25px">2025-01-01</div>
<div class="cell" style="right:608.6px;top:114.52px">25년1월</div>
<div class="cell" style="right:555.35px;top:98.25px">14</div>
<div class="cell" style="right:555.35px;top:114.52px">14</div>
<svg style="left:0;top:0" width="260" height="130" viewBox="0 0 260 130"><rect x="143.4" y="97.75" width="53.85" height="16.97" fill="none" stroke="#1d6f42" stroke-width="1.5"/></svg>
<div style="position:absolute;left:194.35px;top:111.72px;width:3.6px;height:3.6px;background:#1d6f42;border:0.7px solid #fff"></div>
<div id="pic">
<div style="position:absolute;white-space:nowrap;left:53.3px;top:9.8px;line-height:32px;height:32px;font-size:28.5px;color:#12a85a;-webkit-text-stroke:0.7px #12a85a">Q<span style="margin-left:1.2px">.</span></div>
<div style="position:absolute;white-space:nowrap;left:87.6px;top:12.5px;line-height:30px;height:30px;font-size:23.5px;color:#111;letter-spacing:1.7px;word-spacing:-0.8px">엑셀에서 사용 기간</div>
<div style="position:absolute;white-space:nowrap;left:54px;top:49.3px;line-height:14px;height:14px;font-size:10.2px;color:#555">pch8****</div>
<div style="position:absolute;white-space:nowrap;left:95.2px;top:49.3px;line-height:14px;height:14px;font-size:10px;color:#c8c8c8">·</div>
<div style="position:absolute;white-space:nowrap;left:101.6px;top:49.3px;line-height:14px;height:14px;font-size:10px;color:#9a9a9a;letter-spacing:0.8px">조회수 13</div>
<div style="position:absolute;white-space:nowrap;left:151.5px;top:49.3px;line-height:14px;height:14px;font-size:10px;color:#c8c8c8">·</div>
<div style="position:absolute;white-space:nowrap;left:156px;top:49.3px;line-height:14px;height:14px;font-size:10px;color:#9a9a9a;letter-spacing:0.8px">4분 전</div>
<div style="position:absolute;white-space:nowrap;left:54px;top:88px;line-height:18px;height:18px;font-size:12.3px;color:#424242;letter-spacing:0.72px">엑셀에서 사용 기간에 대한 월단위 기간</div>
<div style="position:absolute;white-space:nowrap;left:54px;top:128px;line-height:18px;height:18px;font-size:12.3px;color:#424242;letter-spacing:0.46px">예를 들면 25년 1월 이면 25년 2월부터</div>
<div style="position:absolute;white-space:nowrap;left:54px;top:147px;line-height:18px;height:18px;font-size:12.3px;color:#424242;letter-spacing:0.5px">있을까요?</div>
<div style="position:absolute;left:53.8px;top:188.5px;width:49.3px;height:22px;border-radius:11px;background:#f2f4f6"></div>
<div style="position:absolute;white-space:nowrap;left:60.5px;top:192.3px;line-height:14px;height:14px;font-size:10.2px;color:#696969;letter-spacing:0.35px">MS엑셀</div>
</div>
</div>
</div>
</body>
</html>
